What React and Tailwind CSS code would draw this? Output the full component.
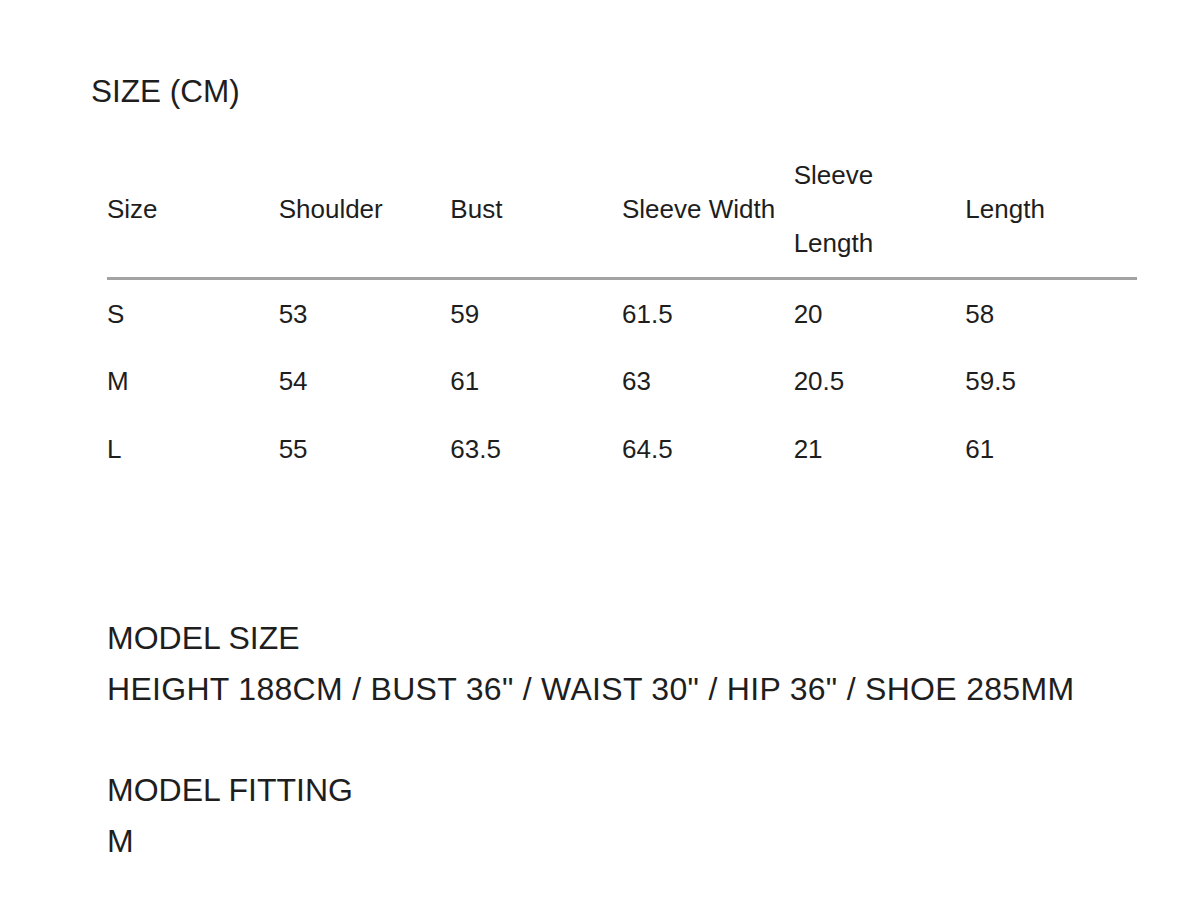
import React from 'react';

const headers = ['Size', 'Shoulder', 'Bust', 'Sleeve Width', null, 'Length'];

const rows = [
  ['S', '53', '59', '61.5', '20', '58'],
  ['M', '54', '61', '63', '20.5', '59.5'],
  ['L', '55', '63.5', '64.5', '21', '61'],
];

const App = () => {
  return (
    <div className="w-[1200px] h-[902px] bg-white text-[#1e1e1e] overflow-hidden" style={{ fontFamily: '"Liberation Sans", Arial, sans-serif' }}>
      {/* Title */}
      <h1 className="pt-[71px] pl-[91px] text-[31.5px] leading-[40px] font-normal">SIZE (CM)</h1>

      {/* Size table */}
      <div className="ml-[107px] mt-[30px] w-[1030px] text-[26px]">
        <div className="grid grid-cols-6 h-[136px] items-center leading-[34px]">
          {headers.map((h, i) =>
            h ? (
              <div key={i}>{h}</div>
            ) : (
              <div key={i} className="flex flex-col gap-[34px]">
                <span>Sleeve</span>
                <span>Length</span>
              </div>
            )
          )}
        </div>
        <div className="h-[3px] bg-[#a3a3a3]" />
        {rows.map((r) => (
          <div key={r[0]} className="grid grid-cols-6 h-[67.5px] items-center leading-[34px]">
            {r.map((c, i) => (
              <div key={i}>{c}</div>
            ))}
          </div>
        ))}
      </div>

      {/* Model info */}
      <div className="ml-[107px] mt-[130px] text-[32px] leading-[51px]">
        <p>MODEL SIZE</p>
        <p className="tracking-[0.3px]">HEIGHT 188CM / BUST 36" / WAIST 30" / HIP 36" / SHOE 285MM</p>
        <p className="mt-[50px]">MODEL FITTING</p>
        <p>M</p>
      </div>
    </div>
  );
};

export default App;
